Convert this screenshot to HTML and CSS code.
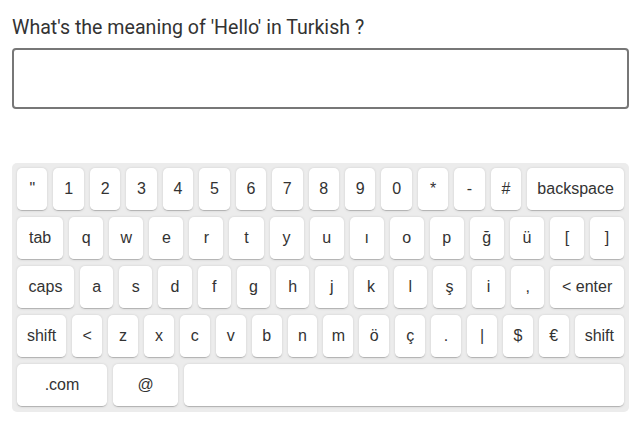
FILE: index.html
```html
<!DOCTYPE html>
<html>
<head>
<meta charset="utf-8">
<link rel="stylesheet" href="styles.css">
</head>
<body>
<div class="page">
  <div class="question">What's the meaning of 'Hello' in Turkish ?</div>
  <div class="answer"></div>
  <div class="keyboard">
    <div class="row">
      <div class="key std">"</div><div class="key std">1</div><div class="key std">2</div><div class="key std">3</div><div class="key std">4</div><div class="key std">5</div><div class="key std">6</div><div class="key std">7</div><div class="key std">8</div><div class="key std">9</div><div class="key std">0</div><div class="key std">*</div><div class="key std">-</div><div class="key std">#</div><div class="key fn">backspace</div>
    </div>
    <div class="row">
      <div class="key fn">tab</div><div class="key std">q</div><div class="key std">w</div><div class="key std">e</div><div class="key std">r</div><div class="key std">t</div><div class="key std">y</div><div class="key std">u</div><div class="key std">ı</div><div class="key std">o</div><div class="key std">p</div><div class="key std">ğ</div><div class="key std">ü</div><div class="key std">[</div><div class="key std">]</div>
    </div>
    <div class="row">
      <div class="key fn">caps</div><div class="key std">a</div><div class="key std">s</div><div class="key std">d</div><div class="key std">f</div><div class="key std">g</div><div class="key std">h</div><div class="key std">j</div><div class="key std">k</div><div class="key std">l</div><div class="key std">ş</div><div class="key std">i</div><div class="key std">,</div><div class="key fn">&lt; enter</div>
    </div>
    <div class="row">
      <div class="key fn">shift</div><div class="key std">&lt;</div><div class="key std">z</div><div class="key std">x</div><div class="key std">c</div><div class="key std">v</div><div class="key std">b</div><div class="key std">n</div><div class="key std">m</div><div class="key std">ö</div><div class="key std">ç</div><div class="key std">.</div><div class="key std">|</div><div class="key std">$</div><div class="key std">€</div><div class="key fn">shift</div>
    </div>
    <div class="row">
      <div class="key dotcom">.com</div><div class="key at">@</div><div class="key space"></div>
    </div>
  </div>
</div>
</body>
</html>
```
FILE: styles.css
```css
html, body {
  margin: 0;
  padding: 0;
  background: #ffffff;
}

.page {
  padding: 16px 0 0 12px;
  width: 617px;
}

.question {
  font-family: Roboto, "Liberation Sans", sans-serif;
  font-size: 19.6px;
  color: #333333;
  line-height: 23px;
  height: 23px;
}

.answer {
  margin-top: 9px;
  height: 61px;
  box-sizing: border-box;
  border: 2px solid #777777;
  border-radius: 4px;
  background: #ffffff;
}

.keyboard {
  margin-top: 54px;
  background: #ececec;
  border-radius: 5px;
  padding: 5px;
  display: flex;
  flex-direction: column;
  gap: 6px;
  font-family: "Liberation Sans", Arial, sans-serif;
  font-size: 16px;
  color: #333333;
}

.row {
  display: flex;
  gap: 6px;
}

.key {
  height: 43px;
  box-sizing: border-box;
  background: #ffffff;
  border-radius: 5px;
  border-bottom: 1px solid #b5b5b5;
  box-shadow: 0 0 3px -1px rgba(0, 0, 0, 0.3);
  padding: 0 5px;
  display: flex;
  align-items: center;
  justify-content: center;
  white-space: nowrap;
}

.std {
  width: 20px;
  flex-grow: 1;
}

.fn {
  flex-grow: 1;
}

.dotcom {
  width: 90px;
  flex: none;
}

.at {
  width: 65px;
  flex: none;
}

.space {
  flex: 1;
}
```
